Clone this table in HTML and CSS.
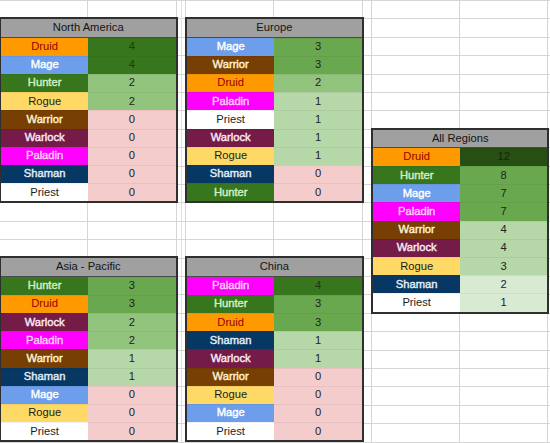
FILE: index.html
```html
<!DOCTYPE html>
<html lang="en">
<head>
<meta charset="utf-8">
<title>Class counts by region</title>
<link rel="stylesheet" href="styles.css">
</head>
<body>
<div class="sheet">
  <section class="tbl na">
    <div class="hd">North America</div>
    <div class="cls druid">Druid</div><div class="val g5">4</div>
    <div class="cls mage">Mage</div><div class="val g5">4</div>
    <div class="cls hunter">Hunter</div><div class="val g3">2</div>
    <div class="cls rogue">Rogue</div><div class="val g3">2</div>
    <div class="cls warrior">Warrior</div><div class="val g0">0</div>
    <div class="cls warlock">Warlock</div><div class="val g0">0</div>
    <div class="cls paladin">Paladin</div><div class="val g0">0</div>
    <div class="cls shaman">Shaman</div><div class="val g0">0</div>
    <div class="cls priest">Priest</div><div class="val g0">0</div>
  </section>

  <section class="tbl eu">
    <div class="hd">Europe</div>
    <div class="cls mage">Mage</div><div class="val g4">3</div>
    <div class="cls warrior">Warrior</div><div class="val g4">3</div>
    <div class="cls druid">Druid</div><div class="val g3">2</div>
    <div class="cls paladin">Paladin</div><div class="val g2">1</div>
    <div class="cls priest">Priest</div><div class="val g2">1</div>
    <div class="cls warlock">Warlock</div><div class="val g2">1</div>
    <div class="cls rogue">Rogue</div><div class="val g2">1</div>
    <div class="cls shaman">Shaman</div><div class="val g0">0</div>
    <div class="cls hunter">Hunter</div><div class="val g0">0</div>
  </section>

  <section class="tbl all">
    <div class="hd">All Regions</div>
    <div class="cls druid">Druid</div><div class="val g6">12</div>
    <div class="cls hunter">Hunter</div><div class="val g4">8</div>
    <div class="cls mage">Mage</div><div class="val g4">7</div>
    <div class="cls paladin">Paladin</div><div class="val g4">7</div>
    <div class="cls warrior">Warrior</div><div class="val g2">4</div>
    <div class="cls warlock">Warlock</div><div class="val g2">4</div>
    <div class="cls rogue">Rogue</div><div class="val g2">3</div>
    <div class="cls shaman">Shaman</div><div class="val g1">2</div>
    <div class="cls priest">Priest</div><div class="val g1">1</div>
  </section>

  <section class="tbl ap">
    <div class="hd">Asia - Pacific</div>
    <div class="cls hunter">Hunter</div><div class="val g4">3</div>
    <div class="cls druid">Druid</div><div class="val g4">3</div>
    <div class="cls warlock">Warlock</div><div class="val g3">2</div>
    <div class="cls paladin">Paladin</div><div class="val g3">2</div>
    <div class="cls warrior">Warrior</div><div class="val g2">1</div>
    <div class="cls shaman">Shaman</div><div class="val g2">1</div>
    <div class="cls mage">Mage</div><div class="val g0">0</div>
    <div class="cls rogue">Rogue</div><div class="val g0">0</div>
    <div class="cls priest">Priest</div><div class="val g0">0</div>
  </section>

  <section class="tbl cn">
    <div class="hd">China</div>
    <div class="cls paladin">Paladin</div><div class="val g5">4</div>
    <div class="cls hunter">Hunter</div><div class="val g4">3</div>
    <div class="cls druid">Druid</div><div class="val g4">3</div>
    <div class="cls shaman">Shaman</div><div class="val g2">1</div>
    <div class="cls warlock">Warlock</div><div class="val g2">1</div>
    <div class="cls warrior">Warrior</div><div class="val g0">0</div>
    <div class="cls rogue">Rogue</div><div class="val g0">0</div>
    <div class="cls mage">Mage</div><div class="val g0">0</div>
    <div class="cls priest">Priest</div><div class="val g0">0</div>
  </section>
</div>
</body>
</html>
```

FILE: styles.css
```css
html, body {
  margin: 0;
  padding: 0;
  background: #fff;
}

body {
  font-family: "Liberation Sans", Arial, Helvetica, sans-serif;
  font-size: 11.2px;
  color: #222;
  overflow: hidden;
}

.sheet {
  width: 550px;
  height: 443px;
  display: grid;
  grid-template-columns: 88px 88.5px 9.5px 88px 88.7px 9.5px 88px 88px 1fr;
  grid-template-rows: repeat(24, 18.4px) 1fr;
  background-color: #fff;
  background-image:
    repeating-linear-gradient(to bottom, #d6d6d6 0 1px, transparent 1px 18.4px),
    linear-gradient(to right,
      transparent 87.5px, #d6d6d6 87.5px 88.5px,
      transparent 88.5px 176px, #d6d6d6 176px 177px,
      transparent 177px 181.5px, #e2e2e2 181.5px 182.5px,
      transparent 182.5px 185.5px, #d6d6d6 185.5px 186.5px,
      transparent 186.5px 273.5px, #d6d6d6 273.5px 274.5px,
      transparent 274.5px 362px, #d6d6d6 362px 363px,
      transparent 363px 371.5px, #d6d6d6 371.5px 372.5px,
      transparent 372.5px 459.5px, #d6d6d6 459.5px 460.5px,
      transparent 460.5px 547.5px, #d6d6d6 547.5px 548.5px,
      transparent 548.5px);
}

.tbl {
  box-sizing: border-box;
  margin: -1px;
  border: 2px solid #2f2f2f;
  background: #fff;
  display: grid;
  grid-template-columns: 1fr 1fr;
  grid-template-rows: repeat(10, 1fr);
}

.na  { grid-column: 1 / 3; grid-row: 2 / 12; }
.eu  { grid-column: 4 / 6; grid-row: 2 / 12; }
.all { grid-column: 7 / 9; grid-row: 8 / 18; }
.ap  { grid-column: 1 / 3; grid-row: 15 / 25; }
.cn  { grid-column: 4 / 6; grid-row: 15 / 25; }

.hd, .cls, .val {
  display: flex;
  align-items: center;
  justify-content: center;
  white-space: nowrap;
  line-height: 1;
}

.hd {
  grid-column: 1 / 3;
  background: #a0a0a0;
  color: #151515;
  border-bottom: 1px solid #4a4a4a;
}

.cls + .val,
.val + .cls {
  box-shadow: inset 0 1px 0 rgba(0, 0, 0, 0.05);
}

.val {
  color: #222;
  box-shadow: inset 0 1px 0 rgba(0, 0, 0, 0.07);
}

.cls.light {
  -webkit-text-stroke: 0.35px currentColor;
}

/* class colours */
.druid   { background: #ff9900; color: #990000; }
.mage    { background: #6d9eeb; color: #ffffff; -webkit-text-stroke: 0.4px #ffffff; }
.hunter  { background: #38761d; color: #d3f1c4; -webkit-text-stroke: 0.4px #d3f1c4; }
.rogue   { background: #ffd966; color: #1c1c1c; }
.warrior { background: #783f04; color: #fff4d6; -webkit-text-stroke: 0.4px #fff4d6; }
.warlock { background: #741b47; color: #fbeaf4; -webkit-text-stroke: 0.4px #fbeaf4; }
.paladin { background: #ff00ff; color: #fbd3f6; -webkit-text-stroke: 0.4px #fbd3f6; }
.shaman  { background: #073763; color: #e3effa; -webkit-text-stroke: 0.4px #e3effa; }
.priest  { background: #ffffff; color: #1c1c1c; }

/* value colour scale */
.g0 { background: #f4cccc; }
.g1 { background: #d9ead3; }
.g2 { background: #b6d7a8; }
.g3 { background: #93c47d; }
.g4 { background: #6aa84f; }
.g5 { background: #38761d; color: #1d3a10; }
.g6 { background: #274e13; color: #15260b; }
```
